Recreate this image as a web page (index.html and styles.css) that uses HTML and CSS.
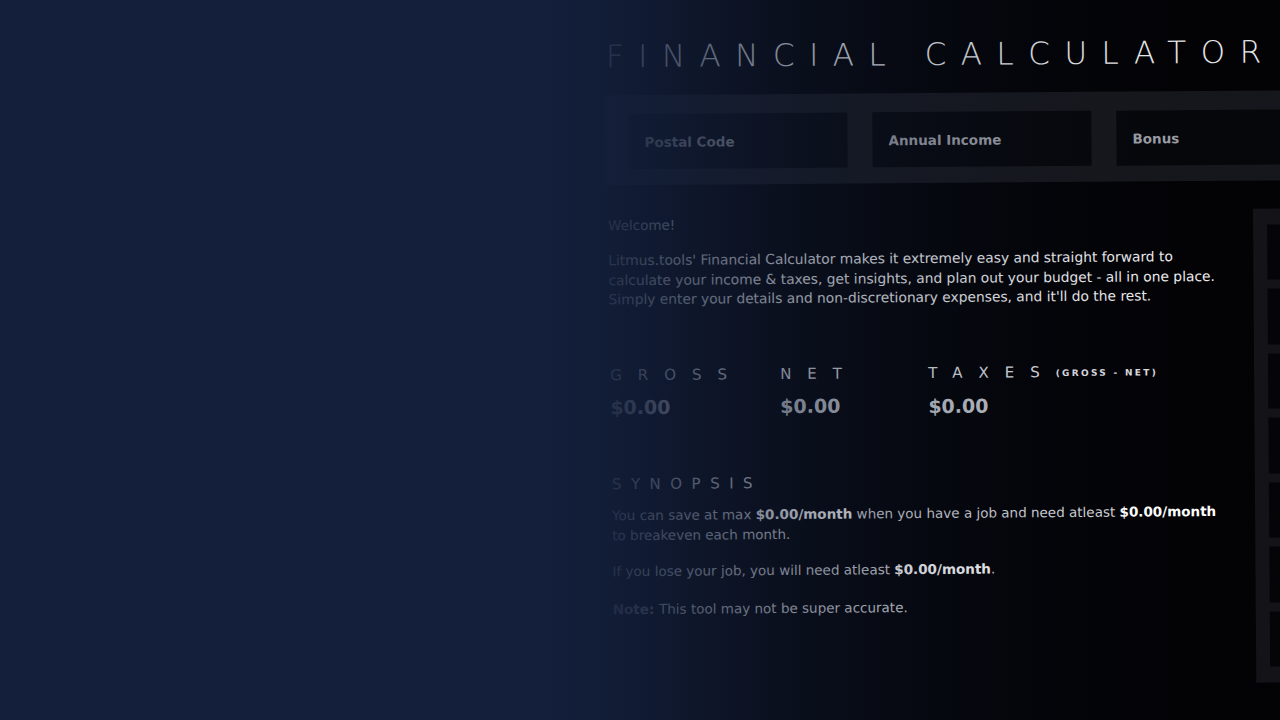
FILE: index.html
```html
<!DOCTYPE html>
<html lang="en">
<head>
<meta charset="utf-8">
<title>Financial Calculator</title>
<link rel="stylesheet" href="styles.css">
</head>
<body>
<div class="page">
  <main class="main">
    <h1 class="title">FINANCIAL CALCULATO<span class="tail">R</span></h1>
    <div class="inputs">
      <input class="field" type="text" placeholder="Postal Code">
      <input class="field" type="text" placeholder="Annual Income">
      <input class="field" type="text" placeholder="Bonus">
    </div>
    <section class="intro">
      <p class="welcome">Welcome!</p>
      <p class="lead">Litmus.tools' Financial Calculator makes it extremely easy and straight forward to<br>calculate your income &amp; taxes, get insights, and plan out your budget - all in one place.<br>Simply enter your details and non-discretionary expenses, and it'll do the rest.</p>
    </section>
    <section class="stats">
      <div class="stat stat-gross">
        <div class="stat-label">GROSS</div>
        <div class="stat-value">$0.00</div>
      </div>
      <div class="stat stat-net">
        <div class="stat-label">NET</div>
        <div class="stat-value">$0.00</div>
      </div>
      <div class="stat stat-taxes">
        <div class="stat-label">TAXE<span class="tail">S</span><span class="stat-note">(GROSS - NET)</span></div>
        <div class="stat-value">$0.00</div>
      </div>
    </section>
    <section class="synopsis">
      <h2 class="syn-title">SYNOPSIS</h2>
      <p class="syn-text">You can save at max <b>$0.00/month</b> when you have a job and need atleast <b>$0.00/month</b><br>to breakeven each month.</p>
      <p class="syn-text syn-loss">If you lose your job, you will need atleast <b>$0.00/month</b>.</p>
      <p class="syn-text syn-note">Note: <span class="syn-plain">This tool may not be super accurate.</span></p>
    </section>
  </main>
  <aside class="side">
    <div class="cell"></div>
    <div class="cell"></div>
    <div class="cell"></div>
    <div class="cell"></div>
    <div class="cell"></div>
    <div class="cell"></div>
    <div class="cell"></div>
  </aside>
</div>
<div class="shade"></div>
</body>
</html>
```

FILE: styles.css
```css
* { box-sizing: border-box; }
html, body {
  margin: 0;
  padding: 0;
  width: 1280px;
  height: 720px;
  overflow: hidden;
  background: #030306;
}
body {
  font-family: "DejaVu Sans", "Liberation Sans", sans-serif;
  color: #e6e6e8;
  position: relative;
}
.page {
  display: flex;
  align-items: flex-start;
  width: 1280px;
  height: 720px;
  transform: rotate(-0.4deg);
  transform-origin: 640px 360px;
}
.main {
  margin-left: 606px;
  width: 648px;
  flex: none;
}
.title {
  margin: 41px 0 0 2px;
  font-size: 31px;
  line-height: 30px;
  font-weight: 200;
  letter-spacing: 14.5px;
  color: #e6e7ea;
  white-space: nowrap;
}
.tail { letter-spacing: 0; }
.inputs {
  margin-top: 24px;
  width: 700px;
  height: 90px;
  background: #16171c;
  display: flex;
  gap: 25px;
  padding: 19px 0 0 24px;
}
.field {
  width: 219px;
  height: 55px;
  flex: none;
  border: none;
  outline: none;
  background: #06070b;
  color: #9a9ca4;
  font-family: inherit;
  font-size: 13.5px;
  font-weight: 600;
  padding: 0 16px;
}
.field::placeholder { color: #9a9ca4; opacity: 1; }
.intro { margin: 30px 0 0 3px; }
.welcome {
  margin: 0;
  font-size: 13.5px;
  line-height: 20px;
  color: #d0d2d6;
}
.lead {
  margin: 16px 0 0;
  font-size: 13.8px;
  line-height: 19.5px;
  color: #ececee;
  white-space: nowrap;
}
.stats {
  display: flex;
  margin: 55px 0 0 4px;
}
.stat-gross { width: 170px; }
.stat-net { width: 148px; }
.stat-label {
  font-size: 15px;
  line-height: 20px;
  letter-spacing: 16px;
  color: #dcdde0;
  white-space: nowrap;
}
.stat-note {
  font-size: 9px;
  font-weight: 700;
  letter-spacing: 2.3px;
  vertical-align: 1px;
  margin-left: 16px;
}
.stat-value {
  margin-top: 10px;
  font-size: 19px;
  line-height: 24px;
  font-weight: 700;
  color: #c3c6cc;
}
.synopsis { margin: 54px 0 0 5px; }
.syn-title {
  margin: 0;
  font-size: 15px;
  line-height: 20px;
  font-weight: 400;
  letter-spacing: 9.5px;
  color: #d8d9dc;
}
.syn-text {
  margin: 0;
  font-size: 13.5px;
  line-height: 20.5px;
  color: #d4d5d9;
  white-space: nowrap;
}
.syn-title + .syn-text { margin-top: 11px; }
.syn-loss { margin-top: 15.5px; }
.syn-note { margin-top: 17.5px; font-weight: 700; color: #8c8f98; }
.syn-plain { font-weight: 400; color: #d4d5d9; }
.syn-text b { color: #ffffff; font-weight: 700; }
.side {
  margin-top: 213px;
  flex: none;
  width: 60px;
  height: 474px;
  background: #141418;
  padding: 16px 0 16px 14px;
  display: flex;
  flex-direction: column;
  gap: 9.3px;
}
.cell {
  flex: 1;
  background: #050508;
}
.shade {
  position: absolute;
  inset: 0;
  pointer-events: none;
  background: linear-gradient(to right,
    rgba(19,31,59,1) 0%,
    rgba(19,31,59,1) 42%,
    rgba(19,31,59,0.9) 48%,
    rgba(19,31,59,0.66) 55%,
    rgba(19,31,59,0.4) 63%,
    rgba(19,31,59,0.2) 72%,
    rgba(19,31,59,0.07) 82%,
    rgba(19,31,59,0) 92%);
}
```
